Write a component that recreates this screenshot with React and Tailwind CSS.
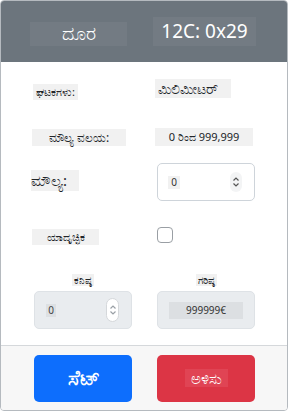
import React from 'react';

const font = { fontFamily: '"Noto Sans", "Liberation Sans", sans-serif' };

function Spinner({ soft }) {
  return (
    <div className={`flex flex-col items-center justify-center rounded-full ${soft ? 'bg-white border border-[#d5d8db] w-[13px] h-[24px]' : 'bg-[#f3f4f5] w-[12px] h-[20px]'}`}>
      <svg width="8" height="6" viewBox="0 0 8 6" fill="none" stroke={soft ? '#9aa0a6' : '#555'} strokeWidth="1.2">
        <path d="M1.5 4.5 L4 2 L6.5 4.5" />
      </svg>
      <svg width="8" height="6" viewBox="0 0 8 6" fill="none" stroke={soft ? '#9aa0a6' : '#555'} strokeWidth="1.2">
        <path d="M1.5 1.5 L4 4 L6.5 1.5" />
      </svg>
    </div>
  );
}

export default function App() {
  return (
    <div className="w-[288px] h-[412px] bg-white" style={font}>
      <div className="w-[288px] h-[411px] border border-[#b5babf] rounded-[4px] overflow-hidden flex flex-col">
        {/* header */}
        <div className="h-[61px] bg-[#6c757d] flex items-center shrink-0">
          <div className="w-[97px] ml-[29px] mt-[4px] h-[24px] bg-[#737b83] flex items-center justify-center text-white text-[19px]">
            ದೂರ
          </div>
          <div className="ml-[26px] w-[103px] h-[29px] bg-[#737b83] flex items-center justify-center text-white text-[19px]">
            12C: 0x29
          </div>
        </div>

        {/* body */}
        <div className="flex-1 bg-white px-[33px] text-[#212529]">
          <div className="grid grid-cols-[98px_98px] gap-x-[25px] h-[34px] items-center mt-[11px]">
            <div className="-ml-[1px]">
              <span className="inline-block bg-[#f1f1f1] px-[3px] h-[16px] leading-[16px] text-[11px]">ಘಟಕಗಳು:</span>
            </div>
            <div className="-ml-[2px] -mt-[4px]">
              <span className="inline-block bg-[#f1f1f1] px-[3px] h-[19px] leading-[19px] text-[14px] w-[76px] whitespace-nowrap">ಮಿಲಿಮೀಟರ್</span>
            </div>
          </div>

          <div className="grid grid-cols-[98px_98px] gap-x-[25px] h-[34px] items-center mt-[12px]">
            <div className="-ml-[2px]">
              <span className="inline-block bg-[#f1f1f1] h-[17px] leading-[17px] text-[12px] w-[94px] text-center whitespace-nowrap">ಮೌಲ್ಯ ವಲಯ:</span>
            </div>
            <div className="-ml-[2px] -mt-[3px]">
              <span className="inline-block bg-[#f1f1f1] h-[18px] leading-[18px] text-[11px] w-[98px] text-center whitespace-nowrap">0 ರಿಂದ 999,999</span>
            </div>
          </div>

          <div className="grid grid-cols-[98px_98px] gap-x-[25px] h-[40px] items-start mt-[10px]">
            <div className="-ml-[3px] pt-[5px]">
              <span className="inline-block bg-[#f1f1f1] h-[21px] leading-[21px] text-[15px] w-[48px] whitespace-nowrap">ಮೌಲ್ಯ:</span>
            </div>
            <div className="h-[38px] border border-[#ced4da] rounded-[5px] flex items-center pl-[10px] pr-[12px] justify-between">
              <span className="bg-[#f1f1f1] h-[13px] w-[12px] text-[10px] leading-[13px] text-center text-[#333]">0</span>
              <Spinner />
            </div>
          </div>

          <div className="grid grid-cols-[98px_98px] gap-x-[25px] h-[32px] items-center mt-[16px]">
            <div className="-ml-[2px]">
              <span className="inline-block bg-[#f1f1f1] h-[16px] leading-[16px] text-[11px] w-[67px] text-center whitespace-nowrap">ಯಾದೃಚ್ಛಿಕ</span>
            </div>
            <div>
              <div className="w-[16px] h-[16px] border border-[#9a9fa4] rounded-[4px] bg-white"></div>
            </div>
          </div>

          <div className="grid grid-cols-[98px_98px] gap-x-[25px] mt-[23px]">
            <div className="flex flex-col items-center">
              <span className="bg-[#f1f1f1] h-[12px] leading-[12px] text-[10px] px-[2px] whitespace-nowrap">ಕನಿಷ್ಠ</span>
              <div className="mt-[5px] w-[98px] h-[38px] bg-[#e9ecef] border border-[#dee2e6] rounded-[5px] flex items-center pl-[11px] pr-[12px] justify-between">
                <span className="bg-[#dde0e3] h-[13px] w-[10px] text-[10px] leading-[13px] text-center text-[#444]">0</span>
                <Spinner soft />
              </div>
            </div>
            <div className="flex flex-col items-center">
              <span className="bg-[#f1f1f1] h-[12px] leading-[12px] text-[10px] px-[2px] whitespace-nowrap">ಗರಿಷ್ಠ</span>
              <div className="mt-[5px] w-[98px] h-[38px] bg-[#e9ecef] border border-[#dee2e6] rounded-[5px] flex items-center justify-center">
                <span className="bg-[#dcdfe2] h-[17px] w-[74px] leading-[17px] text-[10px] text-center text-[#333]">999999€</span>
              </div>
            </div>
          </div>
        </div>

        {/* footer */}
        <div className="h-[65px] shrink-0 bg-[#f7f7f7] border-t border-[#d5d8db] px-[33px] grid grid-cols-[98px_98px] gap-x-[25px] items-center">
          <button className="h-[47px] rounded-[5px] bg-[#0d6efd] text-white text-[20px] font-bold flex items-center justify-center">
            ಸೆಟ್
          </button>
          <button className="h-[47px] rounded-[5px] bg-[#dc3545] text-white text-[15px] flex items-center justify-center">
            <span className="bg-[#e04454] px-[6px] h-[18px] leading-[18px] whitespace-nowrap">ಅಳಿಸು</span>
          </button>
        </div>
      </div>
    </div>
  );
}
